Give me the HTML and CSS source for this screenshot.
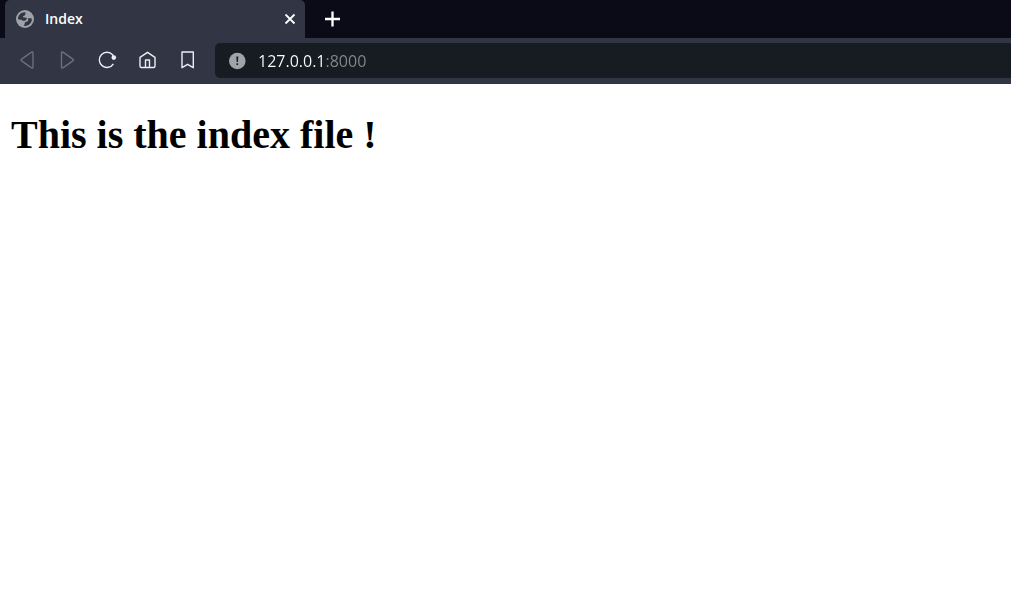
FILE: index.html
```html
<!DOCTYPE html>
<html lang="en">
<head>
<meta charset="utf-8">
<meta name="viewport" content="width=device-width, initial-scale=1">
<title>Index</title>
<link rel="stylesheet" href="styles.css">
</head>
<body>
<header class="browser">
  <div class="tab-strip">
    <div class="tab">
      <svg class="globe" viewBox="0 0 20 20" aria-hidden="true">
        <circle cx="10" cy="10" r="9" fill="#a0a2aa"/>
        <path d="M10.4 3.2C5.5 3 2.8 6.5 3 10.3C4.5 11 6 10.5 7 11.2C8 12.2 9.5 11.8 10.4 11.4L12 9.7C11.8 8.5 10.5 8.4 9 8.4C7.5 8.3 7.4 7.3 8.7 6.9C10.2 6.5 10.5 5.8 10.4 3.2Z" fill="#323543"/>
        <path d="M16.8 9.2C15.5 9.8 14.2 8.8 13 9.5C12.5 10.3 13.6 10.8 13.2 11.8C12.5 13 10.7 12.4 10 13.6C9.5 14.6 9.8 15.8 8.7 16.9C13 17.5 17.4 14.2 16.8 9.2Z" fill="#323543"/>
      </svg>
      <span class="tab-title">Index</span>
      <button class="close" type="button" aria-label="Close tab">
        <svg viewBox="0 0 12 12" aria-hidden="true"><path d="M1.5 1.5L10.5 10.5M10.5 1.5L1.5 10.5" fill="none" stroke="#fff" stroke-width="1.8"/></svg>
      </button>
    </div>
    <button class="new-tab" type="button" aria-label="New tab">
      <svg viewBox="0 0 16 16" aria-hidden="true"><path d="M7.5 .5V15.5M0 8H15" fill="none" stroke="#fff" stroke-width="2.3"/></svg>
    </button>
  </div>
  <nav class="toolbar" aria-label="Navigation">
    <div class="tools">
      <button class="tool muted" type="button" aria-label="Back">
        <svg viewBox="0 0 20 20"><path d="M14.6 2.1Q16 1.4 16 2.9V17.1Q16 18.6 14.6 17.9L4.6 10.9Q3.5 10 4.6 9.1Z"/></svg>
      </button>
      <button class="tool muted" type="button" aria-label="Forward">
        <svg viewBox="0 0 20 20"><path d="M5.9 2.1Q4.5 1.4 4.5 2.9V17.1Q4.5 18.6 5.9 17.9L15.9 10.9Q17 10 15.9 9.1Z"/></svg>
      </button>
      <button class="tool" type="button" aria-label="Reload">
        <svg viewBox="0 0 20 20"><path d="M16.4 13.8A7.6 7.6 0 1 1 15.6 4.8L16.8 6.8"/><circle cx="16.8" cy="7.6" r="2.3" fill="currentColor" stroke="none"/></svg>
      </button>
      <button class="tool" type="button" aria-label="Home">
        <svg viewBox="0 0 20 20"><path d="M3 7.3L10.5 2.3L18 7.3V16Q18 17.5 16.5 17.5H4.5Q3 17.5 3 16Z"/><path d="M8.5 17.5V10H12.5V17.5"/></svg>
      </button>
      <button class="tool" type="button" aria-label="Bookmark">
        <svg viewBox="0 0 20 20"><path d="M5 2H16.3V17.7L10.6 14.3L5 17.7Z"/></svg>
      </button>
    </div>
    <label class="address">
      <svg class="info" viewBox="0 0 18 18" role="img" aria-label="Site information"><circle cx="9.3" cy="9" r="8.3" fill="#a0a3aa"/><path d="M8.3 4.5H10.3L9.9 10H8.7ZM8.5 11.3H10.1V13H8.5Z" fill="#171b22"/></svg>
      <input class="url" type="text" aria-label="Address" value="127.0.0.1:8000" spellcheck="false">
    </label>
  </nav>
</header>
<main class="page">
  <h1 class="heading">This is the index file !</h1>
</main>
</body>
</html>
```
FILE: styles.css
```css
* {
  box-sizing: border-box;
}

body {
  margin: 0;
  background: #fff;
}

button {
  display: flex;
  align-items: center;
  justify-content: center;
  padding: 0;
  border: 0;
  background: none;
  color: #eceef5;
}

svg {
  display: block;
  flex: none;
}

.browser {
  font-family: "Open Sans", "Noto Sans", sans-serif;
  background: #323543;
}

.tab-strip {
  display: flex;
  height: 38px;
  padding-left: 5px;
  background: #0b0b17;
}

.tab {
  display: flex;
  align-items: center;
  width: 300px;
  padding: 0 8px 0 10px;
  border-radius: 5px 5px 0 0;
  background: #323543;
}

.globe {
  width: 20px;
  height: 20px;
}

.tab-title {
  flex: 1;
  margin-left: 10px;
  color: #fff;
  font-size: 14px;
  font-weight: 600;
  line-height: 20px;
}

.close {
  width: 14px;
  height: 20px;
}

.close svg {
  width: 12px;
  height: 12px;
}

.new-tab {
  width: 40px;
  margin-left: 8px;
}

.new-tab svg {
  width: 16px;
  height: 16px;
}

.toolbar {
  display: flex;
  padding: 5px 0 6px 7px;
}

.tools {
  display: flex;
  margin-right: 8px;
}

.tool {
  width: 40px;
  height: 34px;
}

.tool svg {
  width: 20px;
  height: 20px;
  fill: none;
  stroke: currentColor;
  stroke-width: 1.4;
  stroke-linejoin: round;
}

.tool.muted {
  color: #6d707c;
}

.address {
  display: flex;
  flex: 1;
  align-items: center;
  gap: 12px;
  height: 35px;
  padding-left: 13px;
  border-radius: 5px 0 0 5px;
  background: #171b22;
}

.info {
  width: 18px;
  height: 18px;
}

.url {
  flex: 1;
  min-width: 0;
  height: 24px;
  padding: 0;
  border: 0;
  outline: 0;
  background: linear-gradient(90deg, #fff 67px, #85888e 67px);
  background-clip: text;
  -webkit-background-clip: text;
  -webkit-text-fill-color: transparent;
  color: #fff;
  font: 16px/24px "Open Sans", "Noto Sans", sans-serif;
}

.page {
  padding: 28px 11px;
}

.heading {
  margin: 0;
  color: #000;
  font: bold 40px/46px "Liberation Serif", "Times New Roman", serif;
}
```
